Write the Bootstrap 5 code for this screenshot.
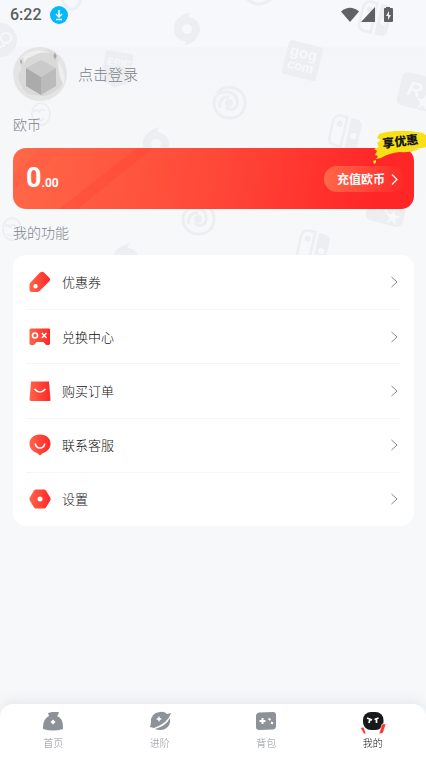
<!DOCTYPE html>
<html lang="zh-CN">
<head>
<meta charset="utf-8">
<meta name="viewport" content="width=device-width, initial-scale=1">
<title>我的</title>
<link href="https://cdn.jsdelivr.net/npm/bootstrap@5.3.0/dist/css/bootstrap.min.css" rel="stylesheet">
<style>
body{font-family:"Noto Sans CJK SC","Liberation Sans",sans-serif;font-weight:300;background:#f6f8fa;color:#222;overflow-x:hidden}
.backdrop{position:absolute;top:0;right:0;width:426px;height:270px;z-index:-1}
.status-bar{height:29px;padding:0 32px 0 10px}
.clock{font:500 16px/29px Roboto,sans-serif;color:#5b5c5e}
.page-main{padding:0 12px 70px 13px}
.profile{margin-top:18px;gap:11px;color:#7d838a;font-size:15px;line-height:24px;text-decoration:none}
.section-title{font-size:14px;line-height:20px;font-weight:300;color:#7d838a;margin:13px 0}
.wallet{position:relative;height:61px;margin-top:14px;border-radius:13px;background:linear-gradient(100deg,#ff6848,#ff4838 50%,#ff2628 90%);padding:0 9px 0 13px;color:#fff}
.wallet-rays{position:absolute;left:0;top:0;width:140px;height:61px}
.balance{position:relative;padding-top:3px;font:700 27px/36px Roboto,sans-serif}
.balance span{font-size:12px}
.topup{height:26px;border:0;border-radius:13px;padding:0 4px 0 13px;gap:4px;background:linear-gradient(90deg,#ff684a,#ff2828);color:#fff;font-size:12px;font-weight:700}
.promo{position:absolute;right:-13px;top:-17px;width:55px;height:34px}
.menu{min-height:271px;display:grid;grid-auto-rows:1fr;background:#fff;border-radius:13px;padding:0 14px 0 13px}
.menu a{color:#111;text-decoration:none;font-size:13px;line-height:20px;padding:0 1px 0 3px;gap:11px}
.menu a+a{border-top:1px solid #f5f5f7}
.tabs{background:#fff;border-radius:13px 13px 0 0;height:53px;box-shadow:0 -2px 14px rgba(60,64,72,.1)}
.tabs a{color:#8d9299;text-decoration:none;font-size:10px;line-height:16px;padding-top:6px;gap:3px}
.tabs a.active{color:#111}
</style>
<script src="https://cdn.jsdelivr.net/npm/bootstrap@5.3.0/dist/js/bootstrap.bundle.min.js"></script>
</head>
<body class="min-vh-100 position-relative">
<svg class="backdrop" viewBox="0 0 426 270" aria-hidden="true">
  <defs>
    <linearGradient id="haze" x2="0" y2="1"><stop offset="0" stop-color="#f7f8fb"/><stop offset=".17" stop-color="#f7f8fb"/><stop offset=".18" stop-color="#f4f5f8"/><stop offset=".4" stop-color="#f5f7f9"/><stop offset="1" stop-color="#f6f8fa"/></linearGradient>
    <g id="storm"><path fill-rule="evenodd" d="M5-17C2-15 1-14 2-12C9-11 13-6 13 0C13 9 5 15-4 17C-1 15-1 14-2 12C-9 11-13 7-13-1C-13-10-5-15 5-17ZM0-5A5 5 0 1 0 0 5A5 5 0 1 0 0-5Z"/></g>
    <g id="swirl" fill="none" stroke="#edeef1" stroke-width="3"><path d="M-12-9C-2-20 16-14 16 1C16 11 9 16 1 16C-9 16-15 9-15 1C-15-7-8-11-1-10C6-9 9-4 8 2C7 8 0 9-3 5"/><path d="M-9 6C-11 0-6-6 0-5"/><circle r="4" cy="1" fill="#edeef1" stroke="none"/></g>
    <g id="console" transform="rotate(13)"><path d="M-1-15H-7Q-14-15-14-8V9Q-14 15-7 15H-1Z" fill="none" stroke="#edeef1" stroke-width="2.5"/><circle cx="-7" cy="-7" r="3"/><path fill-rule="evenodd" d="M3-15H8Q15-15 15-8V9Q15 16 8 16H3ZM9-1A3 3 0 1 0 9 5A3 3 0 1 0 9-1Z"/></g>
    <g id="star-badge" transform="rotate(14)"><rect x="-19" y="-17" width="38" height="34" rx="6"/><path fill="#f7f8fa" d="M8 1l2 5 6 0-5 4 2 6-5-4-5 4 2-6-5-4 6 0z"/><text x="-11" y="5" font-family="Liberation Sans,sans-serif" font-size="20" font-weight="700" font-style="italic" fill="#f7f8fa">R</text></g>
    <g id="face" fill="none" stroke="#edeef1" stroke-width="2"><ellipse rx="9" ry="11"/><path d="M-7-2q3-4 5 0q3-4 6-1M-5 5q5 4 8-1"/></g>
  </defs>
  <rect width="426" height="270" fill="url(#haze)"/>
  <g fill="#edeef1">
    <g fill="none" stroke="#edeef1" stroke-width="3"><path d="M62 0q10 19 19 0"/><path d="M247-1q12 10 24 0"/></g>
    <circle cx="0" cy="40" r="17"/><circle cx="6" cy="38" r="5" fill="none" stroke="#f7f8fa" stroke-width="2"/><path d="M-4 49l9-4" stroke="#f7f8fa" stroke-width="2"/>
    <use href="#storm" x="187" y="29"/><use href="#storm" x="156" y="144"/><use href="#storm" x="126" y="260"/>
    <g transform="translate(117 70) rotate(9)"><path d="M-14-18H14V11L0 18L-14 11Z"/><text x="-11" y="-4" font-family="Liberation Sans,sans-serif" font-size="10" font-weight="700" fill="#f7f8fa">EPIC</text></g>
    <g transform="translate(302 60) rotate(14)"><rect x="-17" y="-17" width="35" height="35" rx="3"/><g font-family="Liberation Sans,sans-serif" font-size="15" font-weight="700" fill="#f7f8fa" text-anchor="middle"><text x="0" y="-2">gog</text><text x="0" y="11" font-size="13">com</text></g></g>
    <use href="#console" x="375" y="18"/><use href="#console" x="345" y="132"/><use href="#console" x="313" y="247"/>
    <use href="#swirl" x="229" y="102"/><use href="#swirl" x="198" y="218"/>
    <use href="#star-badge" x="418" y="92"/><use href="#star-badge" x="387" y="207"/>
    <use href="#face" x="41" y="114"/><use href="#face" x="12" y="229"/>
  </g>
</svg>

<header class="status-bar d-flex align-items-center justify-content-between">
  <div class="d-flex align-items-center gap-2"><span class="clock">6:22</span>
    <svg width="18" height="18" viewBox="0 0 18 18"><circle cx="9" cy="9" r="9" fill="#04b8fb"/><path d="M9 4v6M6 8l3 3 3-3M6 13.5h6" fill="none" stroke="#fff" stroke-width="1.5"/></svg></div>
  <svg width="53" height="16" viewBox="0 0 53 16" fill="#606163"><path d="M0 4.5Q9-3 18 4.5L9 15Z"/><path d="M34 0V15H20Z"/><path fill-rule="evenodd" d="M45 0h4v1h2q1 0 1 1v12q0 1-1 1h-7q-1 0-1-1V2q0-1 1-1h1zM48 4l-3 5h2v4l3-5h-2z"/></svg>
</header>

<main class="page-main">
  <a href="#" class="profile d-flex align-items-center">
    <svg width="54" height="54" viewBox="0 0 54 54"><defs><clipPath id="round"><circle cx="27" cy="27" r="27"/></clipPath></defs><g clip-path="url(#round)"><path fill="#e4e4e5" d="M0 0h54v54H0z"/><path fill="#d9d9da" d="M9 12Q18 1 31 3Q42 3 45 11Q42 20 49 27Q53 38 42 44Q34 51 25 48Q11 49 9 39Q2 30 8 23Z"/><path fill="#eeeeef" d="M10 9Q23-1 38 6Q27 4 20 9Q12 11 11 17ZM46 15Q53 25 51 38Q44 28 46 15Z"/><path fill="#cacacb" d="M13 21L28 13L43 21L28 30Z"/><path fill="#ababac" d="M13 21L28 30V48L13 39Z"/><path fill="#bbbbbc" d="M43 21L28 30V48L43 39Z"/><path fill="#a4a4a6" d="M42 5l1 3 1 1-1 1-1 3-1-3-1-1 1-1zM8 12l1 3-1 3-1-4z"/></g></svg>
    <span>点击登录</span>
  </a>
  <h2 class="section-title">欧币</h2>
  <section class="wallet d-flex align-items-center justify-content-between">
    <svg class="wallet-rays" viewBox="0 0 140 61" aria-hidden="true"><path d="M28 0H53L0 43V27Z" fill="#ff5b43" opacity=".45"/><path d="M124 0H140L65 61H46Z" fill="#ff3f32" opacity=".3"/></svg>
    <div class="balance">0<span>.00</span></div>
    <button type="button" class="topup d-flex align-items-center">充值欧币
      <svg width="12" height="12" viewBox="0 0 12 12" fill="none" stroke="#fff" stroke-width="1.2"><path d="M3 1.5L8 6.5L3 11.5"/></svg></button>
    <svg class="promo" viewBox="0 0 55 34" role="img" aria-label="享优惠"><path fill="#f8df16" d="M7 3Q19-1 38 0L51 2L55 5V16Q43 18 34 19L48 18Q37 22 28 21Q17 22 9 27L4 28L6 25L3 24L5 20L2 18L7 16L5 12L9 9L5 7ZM1 30l3-1v3l-2 1z"/><text transform="translate(11 17) rotate(-7)" font-size="12" font-weight="900" fill="#171719">享优惠</text></svg>
  </section>
  <h2 class="section-title" id="functions">我的功能</h2>
  <nav class="menu" aria-labelledby="functions">
    <a href="#" class="d-flex align-items-center"><svg width="22" height="22" viewBox="0 0 22 22"><defs><linearGradient id="red"><stop stop-color="#ff654a"/><stop offset="1" stop-color="#ff2628"/></linearGradient></defs><path fill="url(#red)" fill-rule="evenodd" d="M11 1.5Q13.5 0 15 1.5L20.5 7Q22 8.5 20.5 10L10.5 20Q9.5 21 8 21H3Q.5 21 .5 18.5V14Q.5 12.5 1.5 11.5ZM6.5 13A2.2 2.2 0 1 0 6.5 17.4A2.2 2.2 0 1 0 6.5 13Z"/></svg><span class="flex-grow-1">优惠券</span><svg width="9" height="12" viewBox="0 0 9 12" fill="none" stroke="#85888d"><path d="M1.5 1L7 6L1.5 11"/></svg></a>
    <a href="#" class="d-flex align-items-center"><svg width="22" height="22" viewBox="0 0 22 22"><path fill="url(#red)" d="M2 2.5H20Q21 2.5 21 3.5V18L20 19H17L14.5 16H7.5L5 19H1.5L.5 18V4Q.5 2.5 2 2.5Z"/><g fill="none" stroke="#fff" stroke-width="1.6"><circle cx="6" cy="9.5" r="2.5"/><path d="M12.8 7l4.7 5M17.5 7l-4.7 5"/></g></svg><span class="flex-grow-1">兑换中心</span><svg width="9" height="12" viewBox="0 0 9 12" fill="none" stroke="#85888d"><path d="M1.5 1L7 6L1.5 11"/></svg></a>
    <a href="#" class="d-flex align-items-center"><svg width="22" height="22" viewBox="0 0 22 22"><path fill="url(#red)" d="M2 1.5H20L21.500 20.500L20.500 21H1.500L.5 20Z"/><path d="M5.500 9Q11 15 16.500 9" fill="none" stroke="#fff" stroke-width="1.700"/></svg><span class="flex-grow-1">购买订单</span><svg width="9" height="12" viewBox="0 0 9 12" fill="none" stroke="#85888d"><path d="M1.5 1L7 6L1.5 11"/></svg></a>
    <a href="#" class="d-flex align-items-center"><svg width="22" height="22" viewBox="0 0 22 22"><path fill="url(#red)" d="M11 .5C17.500.5 21.500 4.500 21.500 9.500C21.500 15 18 17.500 14 19L11 21.500L8 19C4 17.500.5 15 .5 9.500C.5 4.500 4.500.5 11 .5Z"/><path d="M6.200 9.500Q7 14 11 14T15.800 9.500" fill="none" stroke="#fff" stroke-width="1.500"/></svg><span class="flex-grow-1">联系客服</span><svg width="9" height="12" viewBox="0 0 9 12" fill="none" stroke="#85888d"><path d="M1.5 1L7 6L1.5 11"/></svg></a>
    <a href="#" class="d-flex align-items-center"><svg width="22" height="22" viewBox="0 0 22 22"><path fill="url(#red)" d="M6.500 1.500H15.500L17 2.500L21.500 10V12L17 19.500L15.500 20.500H6.500L5 19.500L.5 12V10L5 2.500Z"/><circle cx="11" cy="11" r="2.500" fill="#fff"/></svg><span class="flex-grow-1">设置</span><svg width="9" height="12" viewBox="0 0 9 12" fill="none" stroke="#85888d"><path d="M1.5 1L7 6L1.5 11"/></svg></a>
  </nav>
</main>

<nav class="tabs fixed-bottom d-flex" aria-label="主导航">
  <a href="#" class="d-flex flex-column align-items-center flex-fill w-25"><svg width="28" height="22" viewBox="0 0 28 22"><path fill="currentColor" fill-rule="evenodd" d="M9 3L13 2H20L19 5L18 6Q24 8 24 17L24 19Q14 22 4 19V17Q4 9 10 6ZM14 9.500L11.500 12L14 14.500L16.500 12Z"/></svg>首页</a>
  <a href="#" class="d-flex flex-column align-items-center flex-fill w-25"><svg width="28" height="22" viewBox="0 0 28 22" fill="currentColor"><path fill-rule="evenodd" d="M14 2Q18 1 21 4L25 3Q22 13 8 18L4 17L5 13Q4 3 14 2ZM13 6l-1 2-2 1 2 1 1 2 1-2 2-1-2-1z"/><path d="M9 19Q20 16 24 8Q25 16 19 19Q14 21 9 19Z"/></svg>进阶</a>
  <a href="#" class="d-flex flex-column align-items-center flex-fill w-25"><svg width="28" height="22" viewBox="0 0 28 22"><path fill="currentColor" d="M7 2.500L21 2Q24 2 24 5V16Q24 19 21 19.500L7 20Q4 20 4 17V6Q4 3 7 2.500Z"/><path d="M10.500 8v6M7.500 11h6M16.500 8.500l2 1.500M19 12.500l2 1" stroke="#fff" stroke-width="2"/></svg>背包</a>
  <a href="#" class="active d-flex flex-column align-items-center flex-fill w-25" aria-current="page"><svg width="28" height="22" viewBox="0 0 28 22" overflow="visible"><rect x="4" y="2" width="20.500" height="18" rx="8" fill="#18191b"/><path d="M8 8l5 2M11 9l-1 4M15.500 9.500l4-1.500M17.500 9v4" stroke="#fff" stroke-width="1.700"/><path fill="#f8392c" stroke="#fff" stroke-width=".5" d="M1.500 18L4.500 17L7 23.500L5 24ZM23 14L27 14L24 23L20 24Z"/></svg>我的</a>
</nav>
</body>
</html>
